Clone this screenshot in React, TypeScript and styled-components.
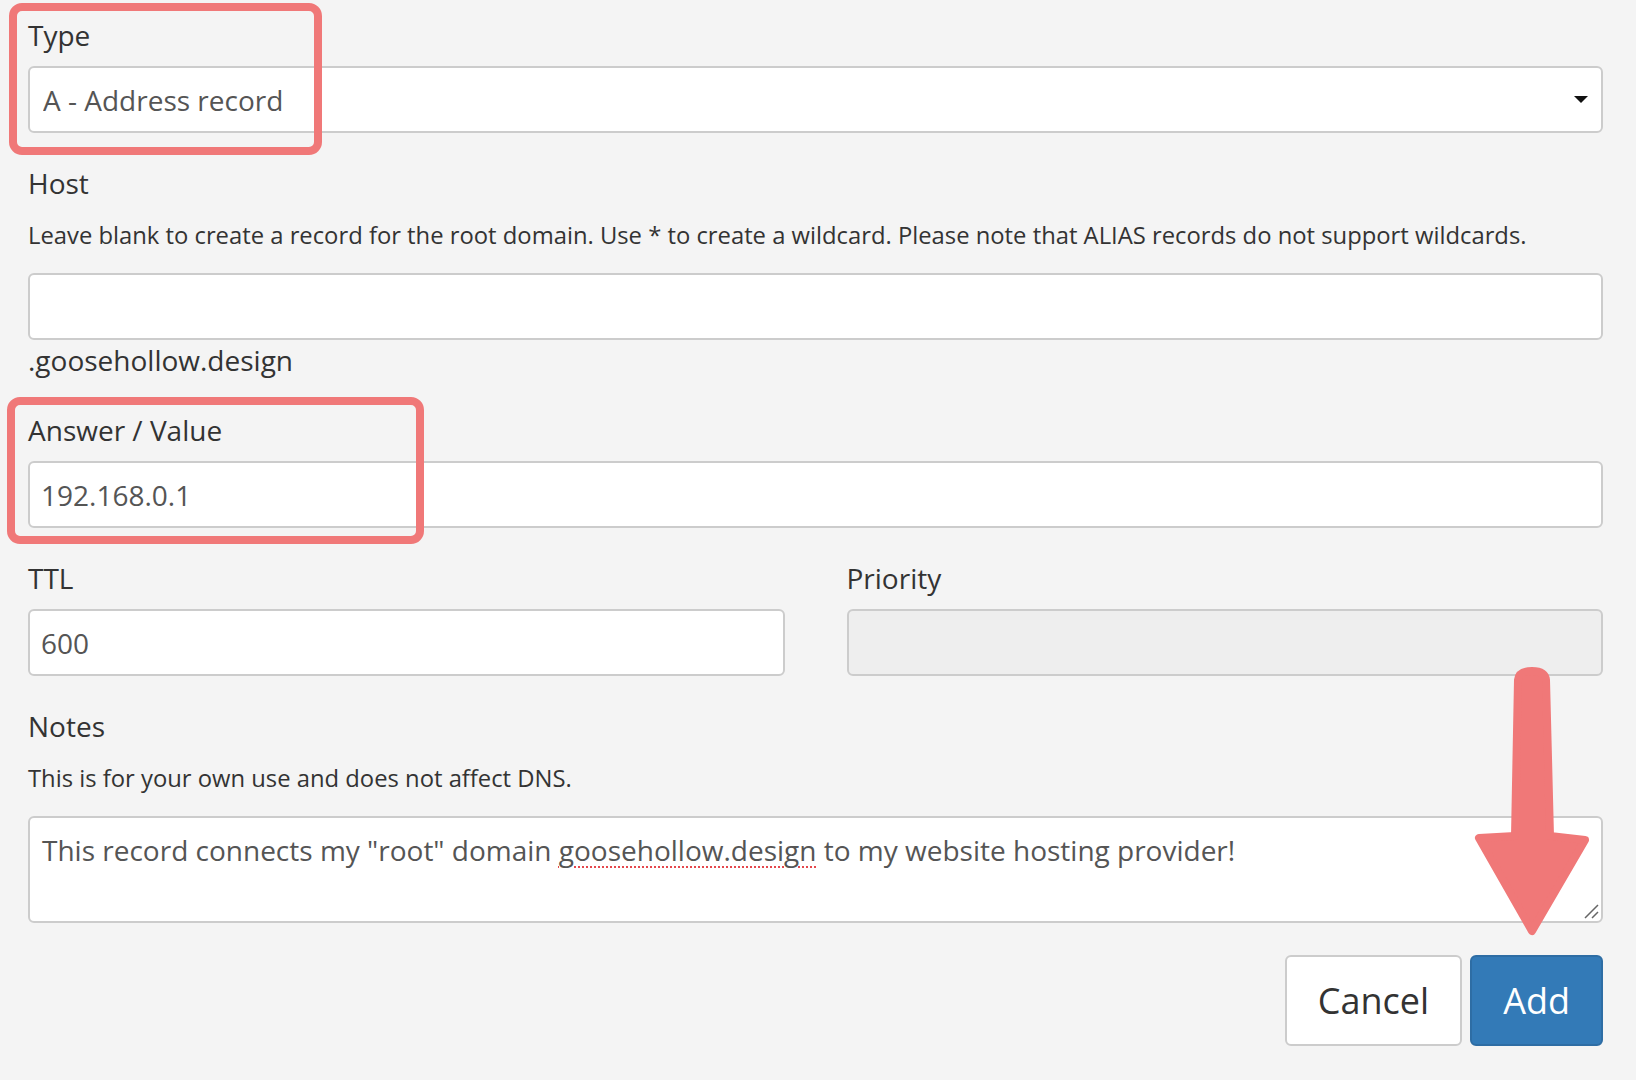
import React from "react";
import styled, { createGlobalStyle } from "styled-components";

const GlobalStyle = createGlobalStyle`
  html, body {
    margin: 0;
    padding: 0;
    background: #f4f4f4;
    font-family: "Open Sans", "Liberation Sans", sans-serif;
  }
  * { box-sizing: border-box; }
`;

const Page = styled.form`
  position: relative;
  min-height: 1080px;
  padding: 15px 33px 0 28px;
`;

const FormGroup = styled.div<{ $mb?: number }>`
  position: relative;
  margin-bottom: ${(p) => (p.$mb ?? 30)}px;
`;

const Label = styled.label`
  display: block;
  font-size: 28px;
  line-height: 40px;
  color: #333;
  margin-bottom: 11px;
`;

const Help = styled.p`
  margin: 15px 0 21px;
  font-size: 23.8px;
  line-height: 34px;
  color: #333;
`;

const Suffix = styled.div`
  font-size: 28px;
  line-height: 40px;
  color: #333;
`;

const TextInput = styled.input<{ $disabled?: boolean }>`
  display: block;
  width: 100%;
  height: 67px;
  padding: 0 11px;
  font-family: inherit;
  font-size: 28px;
  color: #555;
  background: ${(p) => (p.$disabled ? "#eeeeee" : "#ffffff")};
  border: 2px solid #cccccc;
  border-radius: 6px;
  outline: none;
`;

const SelectWrap = styled.div`
  position: relative;
`;

const Select = styled.select`
  display: block;
  width: 100%;
  height: 67px;
  padding: 0 13px;
  font-family: inherit;
  font-size: 28px;
  color: #555;
  background: #fff;
  border: 2px solid #cccccc;
  border-radius: 6px;
  appearance: none;
  -webkit-appearance: none;
  outline: none;
`;

const Caret = styled.svg`
  position: absolute;
  right: 15px;
  top: calc(50% - 3.5px);
  pointer-events: none;
`;

const Row = styled.div`
  display: grid;
  grid-template-columns: 1fr 1fr;
  column-gap: 62px;
`;

const NotesBox = styled.div`
  position: relative;
  height: 107px;
  padding: 12px 12px;
  font-size: 28px;
  line-height: 40px;
  color: #555;
  background: #fff;
  border: 2px solid #cccccc;
  border-radius: 6px;
`;

const Misspelled = styled.span`
  text-decoration: underline dotted #e5484d;
  text-decoration-thickness: 2px;
  text-underline-offset: 5px;
`;

const Grip = styled.svg`
  position: absolute;
  right: 2px;
  bottom: 2px;
`;

const Actions = styled.div`
  display: flex;
  justify-content: flex-end;
  gap: 8px;
  margin-top: 32px;
`;

const Button = styled.button<{ $primary?: boolean }>`
  height: 91px;
  padding: 0 31px;
  font-family: inherit;
  font-size: 36px;
  border-radius: 6px;
  border: 2px solid ${(p) => (p.$primary ? "#2e6da4" : "#cccccc")};
  background: ${(p) => (p.$primary ? "#337ab7" : "#ffffff")};
  color: ${(p) => (p.$primary ? "#ffffff" : "#333333")};
  cursor: pointer;
`;

const Highlight = styled.div<{ $l: number; $t: number; $w: number; $h: number }>`
  position: absolute;
  left: ${(p) => p.$l}px;
  top: ${(p) => p.$t}px;
  width: ${(p) => p.$w}px;
  height: ${(p) => p.$h}px;
  border: 8px solid #f07878;
  border-radius: 13px;
  pointer-events: none;
`;

const Arrow = styled.svg`
  position: absolute;
  left: 1468px;
  top: 660px;
  pointer-events: none;
`;

export default function App() {
  return (
    <>
      <GlobalStyle />
      <Page onSubmit={(e) => e.preventDefault()}>
        <FormGroup>
          <Label>Type</Label>
          <SelectWrap>
            <Select defaultValue="A">
              <option value="A">A - Address record</option>
            </Select>
            <Caret width="14" height="7" viewBox="0 0 14 7">
              <path d="M0 0 L14 0 L7 7 Z" fill="#111" />
            </Caret>
          </SelectWrap>
          <Highlight $l={-19} $t={-12} $w={313} $h={152} />
        </FormGroup>

        <FormGroup>
          <Label>Host</Label>
          <Help>
            Leave blank to create a record for the root domain. Use * to create a wildcard. Please note that ALIAS records do not support wildcards.
          </Help>
          <TextInput type="text" />
          <Suffix>.goosehollow.design</Suffix>
        </FormGroup>

        <FormGroup>
          <Label>Answer / Value</Label>
          <TextInput type="text" defaultValue="192.168.0.1" />
          <Highlight $l={-21} $t={-13} $w={417} $h={147} />
        </FormGroup>

        <Row>
          <FormGroup>
            <Label>TTL</Label>
            <TextInput type="text" defaultValue="600" />
          </FormGroup>
          <FormGroup>
            <Label>Priority</Label>
            <TextInput type="text" $disabled disabled />
          </FormGroup>
        </Row>

        <FormGroup $mb={0}>
          <Label>Notes</Label>
          <Help>This is for your own use and does not affect DNS.</Help>
          <NotesBox role="textbox">
            This record connects my "root" domain <Misspelled>goosehollow.design</Misspelled> to my website hosting provider!
            <Grip width="16" height="16" viewBox="0 0 16 16">
              <path d="M2 15 L15 2 M9 15 L15 9" stroke="#666" strokeWidth="1.5" fill="none" />
            </Grip>
          </NotesBox>
        </FormGroup>

        <Actions>
          <Button type="button">Cancel</Button>
          <Button type="submit" $primary>
            Add
          </Button>
        </Actions>

        <Arrow width="130" height="285" viewBox="0 0 130 285">
          <path
            d="M 47 176 L 50 20 Q 51 11 64 11 Q 77 11 78 20 L 82 176 L 117 180 L 64 271 L 11 178 Z"
            fill="#f07878"
            stroke="#f07878"
            strokeWidth="8"
            strokeLinejoin="round"
          />
        </Arrow>
      </Page>
    </>
  );
}
